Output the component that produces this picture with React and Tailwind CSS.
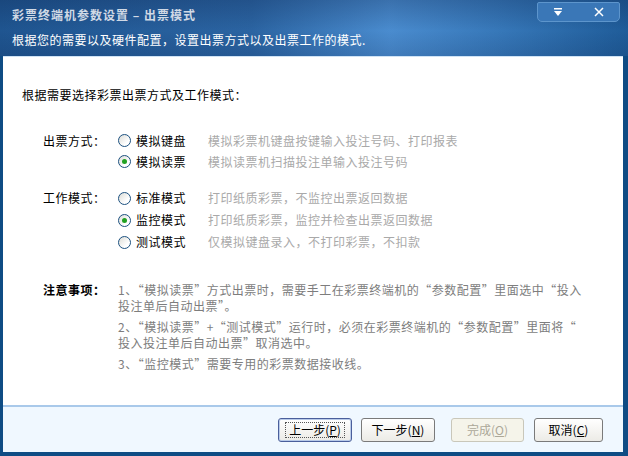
import React from "react";

const font = { fontFamily: '"Noto Sans CJK SC", "Liberation Sans", sans-serif' };

function Radio({ checked }) {
  return (
    <span className="w-[13px] h-[13px] rounded-full border border-[#1c5180] bg-[linear-gradient(135deg,#dcdcd6,#ffffff_70%)] flex items-center justify-center shrink-0">
      {checked && <span className="w-[5px] h-[5px] rounded-full bg-[#21a121]" />}
    </span>
  );
}

function Option({ checked, label, desc, h }) {
  return (
    <div className={`flex items-center ${h}`}>
      <div className="w-[90px] flex items-center gap-[5px]">
        <Radio checked={checked} />
        <span className="text-[12px] text-black">{label}</span>
      </div>
      <span className="text-[12px] text-[#a9a9a9]">{desc}</span>
    </div>
  );
}

function Btn({ children, focus, disabled, className }) {
  return (
    <div
      className={`h-[24px] rounded-[3px] border flex items-center justify-center text-[12px] ${
        disabled
          ? "border-[#c9c7ba] bg-[#f5f4ea] text-[#aca899]"
          : focus
          ? "border-[#4a5f9c] bg-[linear-gradient(to_bottom,#ffffff,#ecebe6)] text-black shadow-[inset_0_0_0_1px_#b9cbe9]"
          : "border-[#7a7a7a] bg-[linear-gradient(to_bottom,#ffffff,#ecebe6)] text-black"
      } ${className}`}
    >
      {focus ? (
        <span className="border border-dotted border-[#555] px-[3px] leading-[14px]">{children}</span>
      ) : (
        children
      )}
    </div>
  );
}

export default function App() {
  return (
    <div style={font} className="w-[628px] h-[456px] flex flex-col bg-[#0f4c84] overflow-hidden">
      {/* Header */}
      <div className="h-[56px] shrink-0 bg-[linear-gradient(to_bottom,rgba(10,30,70,0.25),rgba(0,0,0,0)_55%,rgba(10,30,70,0.15)),linear-gradient(to_right,#1f5590_0%,#2b64a2_40%,#4a8ccf_62%,#3677b8_80%,#1f5c99_100%)] flex flex-col pl-[12px]">
        <div className="flex items-start justify-between h-[29px]">
          <div className="pt-[6px] text-[12px] font-bold text-[#d0d9e5] leading-[18px] tracking-[1px]">
            彩票终端机参数设置 – 出票模式
          </div>
          <div className="mt-[2px] mr-[8px] w-[83px] h-[20px] rounded-b-[5px] rounded-t-[2px] bg-[#3a77b7] border border-[#5d95cc] flex items-center justify-around text-white">
            <svg width="10" height="9" viewBox="0 0 10 9">
              <rect x="1" y="0" width="8" height="1.5" fill="#fff" />
              <path d="M1 3 L9 3 L5 8 Z" fill="#fff" />
            </svg>
            <svg width="10" height="10" viewBox="0 0 10 10">
              <path d="M1 1 L9 9 M9 1 L1 9" stroke="#fff" strokeWidth="1.5" />
            </svg>
          </div>
        </div>
        <div className="text-[12px] text-white leading-[18px] pt-[2px] tracking-[0.5px]">
          根据您的需要以及硬件配置，设置出票方式以及出票工作的模式.
        </div>
      </div>

      {/* Body */}
      <div className="flex-1 flex flex-col ml-[3px] mr-[5px] mb-[4px]">
        <div className="h-[349px] bg-white border-t border-[#cfe3f5] pt-[30px] pl-[19px] text-[12px] leading-[16px] tracking-[0.5px]">
          <div className="text-black">根据需要选择彩票出票方式及工作模式：</div>

          <div className="flex pl-[21px] mt-[27px]">
            <div className="w-[75px] h-[21px] flex items-center text-black">出票方式：</div>
            <div className="flex flex-col">
              <Option h="h-[21px]" label="模拟键盘" desc="模拟彩票机键盘按键输入投注号码、打印报表" />
              <Option h="h-[21px]" checked label="模拟读票" desc="模拟读票机扫描投注单输入投注号码" />
            </div>
          </div>

          <div className="flex pl-[21px] mt-[15px]">
            <div className="w-[75px] h-[22px] flex items-center text-black">工作模式：</div>
            <div className="flex flex-col">
              <Option h="h-[22px]" label="标准模式" desc="打印纸质彩票，不监控出票返回数据" />
              <Option h="h-[22px]" checked label="监控模式" desc="打印纸质彩票，监控并检查出票返回数据" />
              <Option h="h-[22px]" label="测试模式" desc="仅模拟键盘录入，不打印彩票，不扣款" />
            </div>
          </div>

          <div className="flex pl-[21px] mt-[29px]">
            <div className="w-[75px] font-bold text-black">注意事项：</div>
            <div className="flex flex-col gap-[5px] text-[#7d7d7d] whitespace-nowrap">
              <div>
                1、“模拟读票”方式出票时，需要手工在彩票终端机的“参数配置”里面选中“投入
                <br />
                投注单后自动出票”。
              </div>
              <div>
                2、“模拟读票”+“测试模式”运行时，必须在彩票终端机的“参数配置”里面将“
                <br />
                投入投注单后自动出票”取消选中。
              </div>
              <div>3、“监控模式”需要专用的彩票数据接收线。</div>
            </div>
          </div>
        </div>

        <div className="flex-1 bg-[#f0f8ff] border-t-2 border-[#a9c9ea] flex items-center pl-[275px]">
          <Btn focus className="w-[74px]">
            上一步(<u>P</u>)
          </Btn>
          <Btn className="w-[74px] ml-[9px]">
            下一步(<u>N</u>)
          </Btn>
          <Btn disabled className="w-[73px] ml-[16px]">
            完成(<u>O</u>)
          </Btn>
          <Btn className="w-[69px] ml-[10px]">
            取消(<u>C</u>)
          </Btn>
        </div>
      </div>
    </div>
  );
}
